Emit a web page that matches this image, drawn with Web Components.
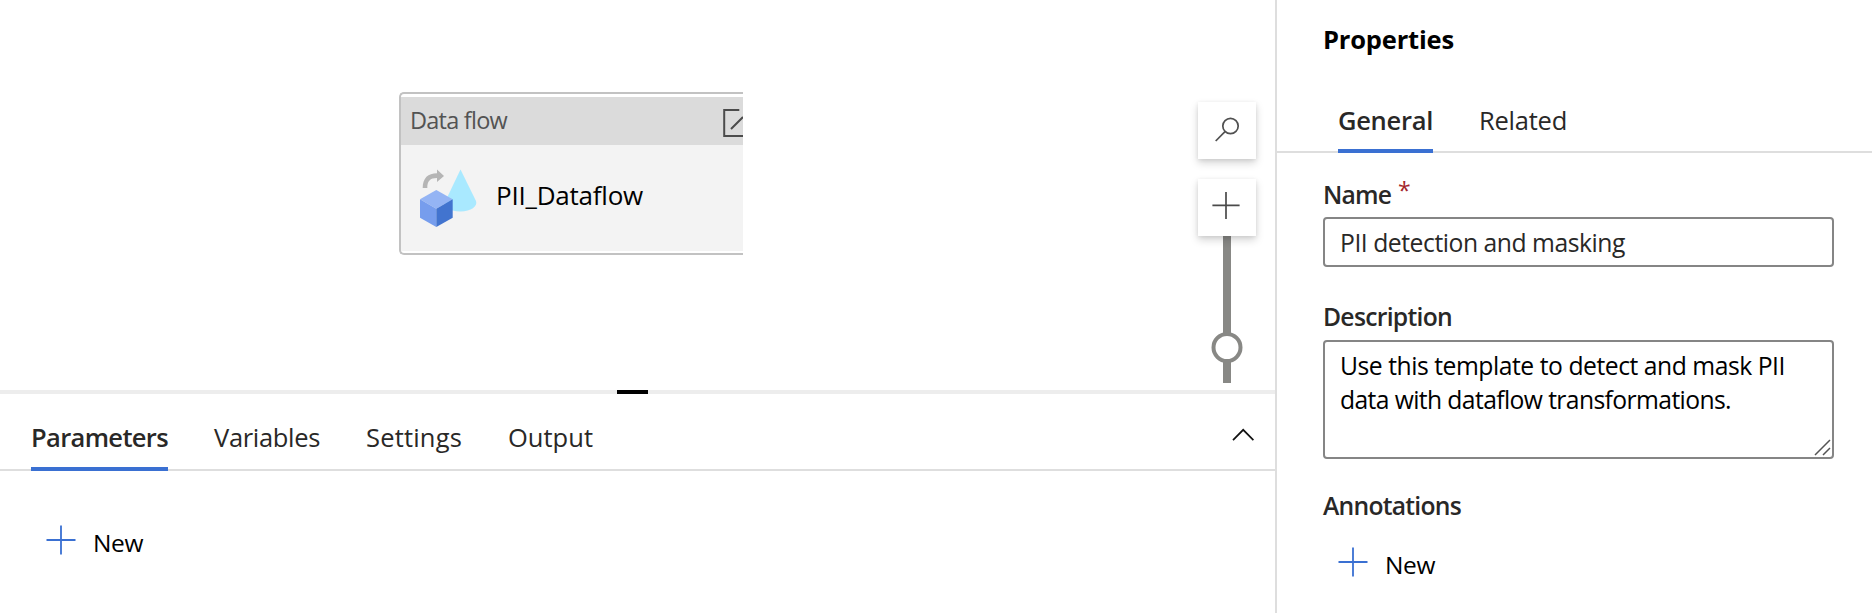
<!DOCTYPE html>
<html lang="en">
<head>
<meta charset="utf-8">
<title>Pipeline editor</title>
<style>
html,body{margin:0;height:100%;background:#fff;overflow:hidden}
body{font-family:"Open Sans","Noto Sans",sans-serif;color:#292827}
</style>
</head>
<body>
<pipeline-editor></pipeline-editor>
<script>
const define = (name, html, ready) => {
  const t = document.createElement('template');
  t.innerHTML = html;
  customElements.define(name, class extends HTMLElement {
    constructor() {
      super();
      this.attachShadow({mode: 'open'}).append(t.content.cloneNode(true));
    }
    connectedCallback() { if (ready) ready(this, this.shadowRoot); }
  });
};

/* A single line of text whose tracking is adjusted to a given advance width. */
define('ui-text', `<style>
:host{display:block;line-height:36px;height:36px;font-size:25.5px;white-space:nowrap}
span{display:inline-block}
</style><span><slot></slot></span>`, (el, root) => {
  const size = el.getAttribute('size');
  if (size) el.style.fontSize = size + 'px';
  const w = +el.getAttribute('width');
  if (!w) return;
  el.style.width = w + 'px';
  const span = root.querySelector('span');
  const natural = span.getBoundingClientRect().width;
  span.style.letterSpacing = ((w - natural) / el.textContent.length).toFixed(3) + 'px';
});

define('ui-tab', `<style>
:host{display:block;box-sizing:border-box;height:100%;border-bottom:4px solid transparent}
:host([selected]){border-color:#3a70d2;font-weight:600}
</style><slot></slot>`);

define('tab-bar', `<style>
:host{display:block;border-bottom:0}
nav{display:flex;height:100%;box-shadow:inset 0 -2px #dedede}
</style><nav><slot></slot></nav>`);

define('add-button', `<style>
:host{display:flex;align-items:flex-start;gap:17px;color:#000}
svg{display:block;flex:none}
</style>
<svg width="30" height="30" fill="none" stroke="#3a70d2" stroke-width="1.8"><path d="M15 .5v29M.5 15h29"/></svg>
<ui-text width="50" size="24.5">New</ui-text>`);

define('activity-card', `<style>
:host{display:block;box-sizing:border-box;width:344px;height:163px;border:2px solid #c2c2c2;border-right:0;border-radius:5px 0 0 5px;padding:3px 0 2px;overflow:hidden;background:#fff}
header{display:flex;justify-content:space-between;height:48px;background:#dbdbdb;color:#535353}
header ui-text{margin:5px 0 0 9px}
header svg{margin-top:12px}
.body{display:flex;height:106px;background:#f3f3f3;color:#000}
.body svg{margin:22px 0 0 18px;flex:none}
.body ui-text{margin:32px 0 0 15px}
</style>
<header><ui-text width="97" size="23.5">Data flow</ui-text>
<svg width="20" height="28" fill="none" stroke="#4b4b4b" stroke-width="2"><path d="M16.3 1H1.2v26H20M8 20 20 8"/></svg></header>
<div class="body">
<svg width="62" height="62">
<path d="M41.5 2.5 57 34c2 5-5 10.5-15.5 10.5S25 40 26 35z" fill="#a9e9ff"/>
<path d="M3.7 21C3.7 11 9 6.3 18 6.3V2.5l7 6.6-7 6V11C11 11 8.3 14 8.3 21z" fill="#b5b5b5"/>
<path d="m17.3 23 16.4 9.2-16.4 9.5L1 32.2z" fill="#94b4f4"/><path d="M1 32.2l16.3 9.5V60L1 50.8z" fill="#769ded"/><path d="m33.7 32.2-16.4 9.5V60l16.4-9.2z" fill="#4274cf"/>
</svg><ui-text width="147" size="26">PII_Dataflow</ui-text></div>`);

define('tool-button', `<style>
:host{display:block;width:58px;height:57px;background:#fff;box-shadow:0 4px 8px rgba(0,0,0,.17),0 1px 4px rgba(0,0,0,.08)}
::slotted(svg){display:block}
</style><slot></slot>`);

define('zoom-tools', `<style>
:host{display:flex;flex-direction:column;align-items:center;width:58px}
tool-button+tool-button{margin-top:20px;position:relative}
.track{display:block}
</style>
<tool-button><svg width="58" height="57" fill="none" stroke="#505050" stroke-width="1.7"><circle cx="32.5" cy="24" r="7.7"/><path d="M27 29.6 17.7 39"/></svg></tool-button>
<tool-button><svg width="58" height="57" fill="none" stroke="#4a4a4a" stroke-width="1.7"><path d="M28 13v27M14.4 26.4h27.2"/></svg></tool-button>
<svg class="track" width="58" height="147" stroke="#888885"><path d="M29 0v147" stroke-width="8"/><circle cx="29" cy="111.5" r="13.5" fill="#fff" stroke-width="4"/></svg>`);

define('flow-canvas', `<style>
:host{display:flex;height:390px;justify-content:space-between}
activity-card{margin:92px 0 0 399px}
zoom-tools{margin:102px 19px 0 0}
</style><activity-card></activity-card><zoom-tools></zoom-tools>`);

define('bottom-panel', `<style>
:host{display:block}
.split{display:flex;height:4px;background:#ededed}
.split i{width:31px;height:4px;margin-left:617px;background:#000}
tab-bar{height:77px}
ui-tab{margin-right:45px}
ui-tab ui-text{margin-top:25px}
.chev{margin:34px 20px 0 auto}
add-button{margin:54px 0 0 46px}
</style>
<div class="split"><i></i></div>
<tab-bar><ui-tab selected style="margin-left:31px;width:137px;margin-right:46px"><ui-text width="137">Parameters</ui-text></ui-tab>
<ui-tab><ui-text width="106">Variables</ui-text></ui-tab>
<ui-tab style="margin-left:1px"><ui-text width="96">Settings</ui-text></ui-tab>
<ui-tab style="margin-left:1px;margin-right:0"><ui-text width="85">Output</ui-text></ui-tab>
<svg class="chev" width="24" height="14" fill="none" stroke="#111" stroke-width="1.7"><path d="M2 12.2 12.2 1.8 22.4 12.2"/></svg></tab-bar>
<add-button></add-button>`);

define('text-field', `<style>
:host{display:block;box-sizing:border-box;width:511px;border:2px solid #858585;border-radius:4px;padding-left:15px}
</style><slot></slot>`);

define('properties-panel', `<style>
:host{display:block;box-sizing:border-box;border-left:2px solid #dedede}
h2{margin:0 0 0 46px;padding-top:21px;font-weight:700;color:#000;font-size:inherit}
tab-bar{height:64px;margin-top:32px}
ui-tab ui-text{margin-top:13px}
.form{padding-left:46px}
.label{display:flex;font-weight:600}
.star{color:#a4262c;font-weight:400;font-size:23px;line-height:26px;height:36px;margin-left:7px}
.area{position:relative;height:119px;color:#000}
.area ui-text{line-height:34.4px;height:34.4px}
.grip{position:absolute;right:1px;bottom:1px}
</style>
<h2><ui-text width="131">Properties</ui-text></h2>
<tab-bar><ui-tab selected style="margin-left:61px;width:95px"><ui-text width="95">General</ui-text></ui-tab>
<ui-tab style="margin-left:46px"><ui-text width="88">Related</ui-text></ui-tab></tab-bar>
<div class="form">
<div class="label" style="padding-top:24px"><ui-text width="68" size="24.7">Name</ui-text><span class="star">*</span></div>
<text-field style="height:50px;margin-top:4px"><ui-text width="285" size="24.7" style="margin-top:6px">PII detection and masking</ui-text></text-field>
<div class="label" style="padding-top:32px"><ui-text width="129" size="24.7">Description</ui-text></div>
<text-field class="area" style="margin-top:5px"><ui-text width="445" size="24.7" style="margin-top:7px">Use this template to detect and mask PII</ui-text><ui-text width="391" size="24.7">data with dataflow transformations.</ui-text>
<svg class="grip" width="17" height="17" fill="none" stroke="#555" stroke-width="1.5"><path d="M1 16 16 1M9 16l7-7"/></svg></text-field>
<div class="label" style="padding-top:29px"><ui-text width="138" size="24.7">Annotations</ui-text></div>
<add-button style="margin:23px 0 0 15px"></add-button>
</div>`);

define('pipeline-editor', `<style>
:host{display:grid;grid-template-columns:1275px 1fr;height:613px;overflow:hidden}
</style><main><flow-canvas></flow-canvas><bottom-panel></bottom-panel></main><properties-panel></properties-panel>`);
</script>
</body>
</html>
